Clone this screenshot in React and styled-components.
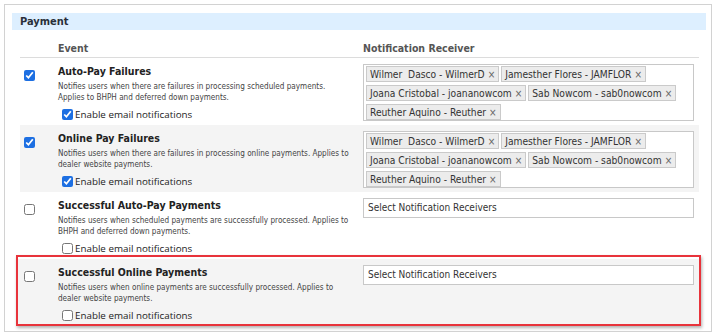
import React from "react";
import styled, { createGlobalStyle } from "styled-components";

const GlobalStyle = createGlobalStyle`
  html, body {
    margin: 0;
    padding: 0;
    background: #ffffff;
  }
  body {
    font-family: "DejaVu Sans Condensed", "DejaVu Sans", sans-serif;
    color: #333;
  }
`;

const events = [
  {
    id: "autopay-fail",
    title: "Auto-Pay Failures",
    desc: ["Notifies users when there are failures in processing scheduled payments.", "Applies to BHPH and deferred down payments."],
    checked: true,
    email: true,
    receivers: [
      "Wilmer  Dasco - WilmerD",
      "Jamesther Flores - JAMFLOR",
      "Joana Cristobal - joananowcom",
      "Sab Nowcom - sab0nowcom",
      "Reuther Aquino - Reuther",
    ],
  },
  {
    id: "online-fail",
    title: "Online Pay Failures",
    desc: ["Notifies users when there are failures in processing online payments. Applies to", "dealer website payments."],
    checked: true,
    email: true,
    shaded: true,
    receivers: [
      "Wilmer  Dasco - WilmerD",
      "Jamesther Flores - JAMFLOR",
      "Joana Cristobal - joananowcom",
      "Sab Nowcom - sab0nowcom",
      "Reuther Aquino - Reuther",
    ],
  },
  {
    id: "autopay-ok",
    title: "Successful Auto-Pay Payments",
    desc: ["Notifies users when scheduled payments are successfully processed. Applies to", "BHPH and deferred down payments."],
    checked: false,
    email: false,
    receivers: [],
  },
  {
    id: "online-ok",
    title: "Successful Online Payments",
    desc: ["Notifies users when online payments are successfully processed. Applies to", "dealer website payments."],
    checked: false,
    email: false,
    shaded: true,
    highlight: true,
    receivers: [],
  },
];

export default function App() {
  return (
    <>
      <GlobalStyle />
      <Panel>
        <SectionTitle>Payment</SectionTitle>
        <Table>
          <HeadRow>
            <span />
            <HeadCell>Event</HeadCell>
            <HeadCell>Notification Receiver</HeadCell>
          </HeadRow>
          {events.map((ev) => (
            <Row key={ev.id} $shaded={ev.shaded} $highlight={ev.highlight}>
              <CheckCell>
                <Check type="checkbox" defaultChecked={ev.checked} />
              </CheckCell>
              <EventCell>
                <EventTitle>{ev.title}</EventTitle>
                <EventDesc>
                  {ev.desc[0]}
                  <br />
                  {ev.desc[1]}
                </EventDesc>
                <EmailLabel>
                  <Check type="checkbox" defaultChecked={ev.email} />
                  Enable email notifications
                </EmailLabel>
              </EventCell>
              <div>
                {ev.receivers.length > 0 ? (
                  <TagBox>
                    {ev.receivers.map((r) => (
                      <Tag key={r}>
                        {r}
                        <TagX>×</TagX>
                      </Tag>
                    ))}
                  </TagBox>
                ) : (
                  <SelectBox>Select Notification Receivers</SelectBox>
                )}
              </div>
            </Row>
          ))}
        </Table>
      </Panel>
    </>
  );
}

const Panel = styled.div`
  box-sizing: border-box;
  margin: 4px 0 0 4px;
  width: 708px;
  height: 328px;
  border: 1px solid #d2d2d2;
  padding: 8px 5px 0 7px;
`;

const SectionTitle = styled.div`
  height: 17px;
  line-height: 18px;
  background: #ddefff;
  padding-left: 8px;
  font-size: 11px;
  font-weight: bold;
  color: #2a2f3a;
`;

const Table = styled.div`
  margin: 0 7px 0 8px;
`;

const HeadRow = styled.div`
  display: grid;
  grid-template-columns: 38px 305px 1fr;
  height: 28px;
  padding-top: 8px;
  box-sizing: border-box;
  align-items: center;
  border-bottom: 1px solid #dcdcdc;
`;

const HeadCell = styled.div`
  font-size: 10.5px;
  font-weight: bold;
  color: #555;
`;

const Row = styled.div`
  position: relative;
  display: grid;
  grid-template-columns: 34px 305px 1fr;
  padding: 6px 5px 3px 4px;
  box-sizing: border-box;
  background: ${(p) => (p.$shaded ? "#f4f4f4" : "transparent")};
  ${(p) =>
    p.$highlight &&
    `
    margin: 0 -2px 0 -4px;
    padding-left: 8px;
    padding-right: 7px;
    &::after {
      content: "";
      position: absolute;
      inset: -4px 0 0 0;
      border: 2px solid #e8333b;
      box-shadow: 1px 2px 3px rgba(0, 0, 0, 0.3);
      pointer-events: none;
    }
  `}
`;

const CheckCell = styled.div`
  padding-top: 2px;
`;

const Check = styled.input`
  width: 11px;
  height: 11px;
  margin: 0;
  accent-color: #1d6fe2;
`;

const EventCell = styled.div`
  display: flex;
  flex-direction: column;
`;

const EventTitle = styled.div`
  font-size: 10.5px;
  font-weight: bold;
  color: #222;
  line-height: 14px;
`;

const EventDesc = styled.div`
  margin-top: 3px;
  font-size: 8.1px;
  line-height: 11px;
  color: #444;
`;

const EmailLabel = styled.label`
  display: flex;
  align-items: center;
  gap: 2px;
  margin-top: 3px;
  padding-left: 4px;
  height: 16px;
  font-family: "Open Sans", sans-serif;
  font-size: 9.8px;
  color: #222;
`;

const TagBox = styled.div`
  display: flex;
  flex-wrap: wrap;
  gap: 3px 2px;
  padding: 1px 2px 0;
  border: 1px solid #c8c8c8;
  background: #fff;
`;

const Tag = styled.span`
  display: inline-flex;
  align-items: center;
  height: 16px;
  box-sizing: border-box;
  padding: 0 3px;
  border: 1px solid #cacaca;
  background: #ececec;
  font-size: 10.2px;
  color: #333;
  white-space: pre;
`;

const TagX = styled.span`
  margin-left: 3px;
  font-size: 10px;
  color: #666;
`;

const SelectBox = styled.div`
  height: 20px;
  box-sizing: border-box;
  border: 1px solid #c8c8c8;
  background: #fff;
  padding-left: 4px;
  line-height: 18px;
  font-size: 10px;
  color: #333;
`;
